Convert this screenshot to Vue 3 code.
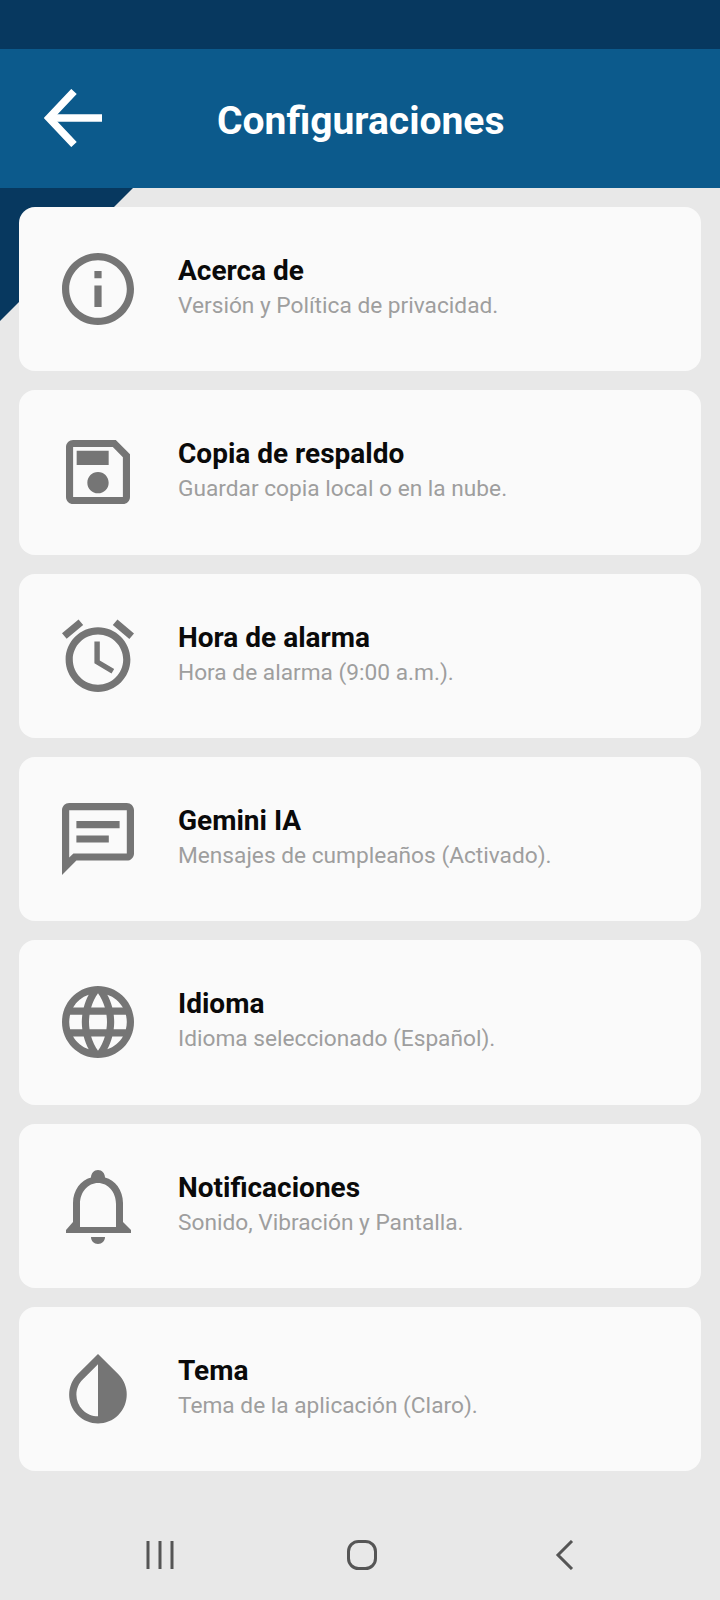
<template>
  <div class="page">
    <div class="status-bar"></div>
    <header class="app-header">
      <svg class="back-icon" width="58" height="58" viewBox="0 0 58 58" fill="none" stroke="currentColor" stroke-width="7.5">
        <path d="M58 29H5" />
        <path d="M30 2.5L5 29l25 26.5" />
      </svg>
      <h1 class="app-title">Configuraciones</h1>
    </header>

    <main class="content">
      <div class="corner"></div>
      <div v-for="item in items" :key="item.title" class="card">
        <svg class="card-icon" width="72" height="72" :viewBox="item.viewBox" fill="currentColor" fill-rule="evenodd">
          <path :d="item.icon" />
        </svg>
        <div class="card-text">
          <div class="card-title">{{ item.title }}</div>
          <div class="card-sub">{{ item.sub }}</div>
        </div>
      </div>
    </main>

    <nav class="nav-bar">
      <div class="nav-slot">
        <svg width="30" height="30" viewBox="0 0 30 30" fill="none" stroke="currentColor" stroke-width="3">
          <path d="M3 1v28M15 1v28M27 1v28" />
        </svg>
      </div>
      <div class="nav-slot">
        <svg width="30" height="30" viewBox="0 0 30 30" fill="none" stroke="currentColor" stroke-width="3">
          <rect x="1.5" y="1.5" width="27" height="27" rx="10" />
        </svg>
      </div>
      <div class="nav-slot">
        <svg width="30" height="30" viewBox="0 0 30 30" fill="none" stroke="currentColor" stroke-width="3">
          <path d="M23 1L9 15l14 14" />
        </svg>
      </div>
    </nav>
  </div>
</template>

<script setup>
const items = [
  {
    title: 'Acerca de',
    sub: 'Versión y Política de privacidad.',
    viewBox: '2 2 20 20',
    icon: 'M11 7h2v2h-2zm0 4h2v6h-2zm1-9C6.48 2 2 6.48 2 12s4.48 10 10 10 10-4.48 10-10S17.52 2 12 2zm0 18c-4.41 0-8-3.59-8-8s3.59-8 8-8 8 3.59 8 8-3.59 8-8 8z',
  },
  {
    title: 'Copia de respaldo',
    sub: 'Guardar copia local o en la nube.',
    viewBox: '1.875 1.875 20.25 20.25',
    icon: 'M17 3H5c-1.11 0-2 .9-2 2v14c0 1.1.89 2 2 2h14c1.1 0 2-.9 2-2V7l-4-4zm2 16H5V5h11.17L19 7.83V19zm-7-7c-1.66 0-3 1.34-3 3s1.34 3 3 3 3-1.34 3-3-1.34-3-3-3zM6 6h9v4H6z',
  },
  {
    title: 'Hora de alarma',
    sub: 'Hora de alarma (9:00 a.m.).',
    viewBox: '2 2 20 20',
    icon: 'M22 5.72l-4.6-3.86-1.29 1.53 4.6 3.86L22 5.72zM7.88 3.39L6.6 1.86 2 5.71l1.29 1.53 4.59-3.85zM12.5 8H11v6l4.75 2.85.75-1.23-4-2.37V8zM12 4c-4.97 0-9 4.03-9 9s4.03 9 9 9 9-4.03 9-9-4.03-9-9-9zm0 16c-3.87 0-7-3.13-7-7s3.13-7 7-7 7 3.13 7 7-3.13 7-7 7z',
  },
  {
    title: 'Gemini IA',
    sub: 'Mensajes de cumpleaños (Activado).',
    viewBox: '2 2 20 20',
    icon: 'M20 2H4c-1.1 0-2 .9-2 2v18l4-4h14c1.1 0 2-.9 2-2V4c0-1.1-.9-2-2-2zm0 14H5.17L4 17.17V4h16v12zM6 7h12v2H6zM6 11h9v2H6z',
  },
  {
    title: 'Idioma',
    sub: 'Idioma seleccionado (Español).',
    viewBox: '2 2 20 20',
    icon: 'M11.99 2C6.47 2 2 6.48 2 12s4.47 10 9.99 10C17.52 22 22 17.52 22 12S17.52 2 11.99 2zm6.93 6h-2.95c-.32-1.25-.78-2.45-1.38-3.56 1.84.63 3.37 1.91 4.33 3.56zM12 4.04c.83 1.2 1.48 2.53 1.91 3.96h-3.82c.43-1.43 1.08-2.76 1.91-3.96zM4.26 14C4.1 13.36 4 12.69 4 12s.1-1.36.26-2h3.38c-.08.66-.14 1.32-.14 2 0 .68.06 1.34.14 2H4.26zm.82 2h2.95c.32 1.25.78 2.45 1.38 3.56-1.84-.63-3.37-1.9-4.33-3.56zm2.95-8H5.08c.96-1.66 2.49-2.93 4.33-3.56C8.81 5.55 8.35 6.75 8.03 8zM12 19.96c-.83-1.2-1.48-2.53-1.91-3.96h3.82c-.43 1.43-1.08 2.76-1.91 3.96zM14.34 14H9.66c-.09-.66-.16-1.32-.16-2 0-.68.07-1.35.16-2h4.68c.09.65.16 1.32.16 2 0 .68-.07 1.34-.16 2zm.25 5.56c.6-1.11 1.06-2.31 1.38-3.56h2.95c-.96 1.65-2.49 2.93-4.33 3.56zM16.36 14c.08-.66.14-1.32.14-2 0-.68-.06-1.34-.14-2h3.38c.16.64.26 1.31.26 2s-.1 1.36-.26 2h-3.38z',
  },
  {
    title: 'Notificaciones',
    sub: 'Sonido, Vibración y Pantalla.',
    viewBox: '0 0 72 72',
    icon: 'M29 7.5C29 3.5 32 0 36 0s7 3.5 7 7.5C53 10 61 20 61 33v19l8 8v3H4v-3l7-8V33C11 20 19 10 29 7.5zM18 57h36V34c0-12-8-21-18-21s-18 9-18 21zM29 67h14c0 4-3 7-7 7s-7-3-7-7z',
  },
  {
    title: 'Tema',
    sub: 'Tema de la aplicación (Claro).',
    viewBox: '2 2 20 20',
    icon: 'M17.66 7.93L12 2.27 6.34 7.93c-3.12 3.12-3.12 8.19 0 11.31C7.9 20.8 9.95 21.58 12 21.58c2.05 0 4.1-.78 5.66-2.34 3.12-3.12 3.12-8.19 0-11.31zM12 19.59c-1.6 0-3.11-.62-4.24-1.76C6.62 16.69 6 15.19 6 13.59s.62-3.11 1.76-4.24L12 5.1v14.49z',
  },
]
</script>

<style scoped>
.page {
  width: 720px;
  height: 1600px;
  background: #e8e8e8;
  font-family: Roboto, "Liberation Sans", sans-serif;
  display: flex;
  flex-direction: column;
}

.status-bar {
  height: 49px;
  background: #07385f;
}

.app-header {
  height: 139px;
  background: #0c5a8c;
  display: flex;
  align-items: center;
  padding-left: 44px;
  color: #fff;
}

.back-icon {
  flex-shrink: 0;
  margin-top: -2px;
}

.app-title {
  margin: 6px 0 0 115px;
  font-size: 39px;
  font-weight: 700;
  line-height: 1;
  color: #fff;
}

.content {
  position: relative;
  padding: 19px 19px 0;
  display: flex;
  flex-direction: column;
  gap: 19px;
}

/* triangulo oscuro detras de la primera tarjeta */
.corner {
  position: absolute;
  left: 0;
  top: 0;
  width: 133px;
  height: 133px;
  background: #07385f;
  clip-path: polygon(0 0, 100% 0, 0 100%);
}

.card {
  position: relative;
  height: 164.33px;
  box-sizing: border-box;
  padding-left: 43px;
  background: #fafafa;
  border-radius: 16px;
  display: flex;
  align-items: center;
  gap: 44px;
}

.card-icon {
  flex-shrink: 0;
  color: #757575;
  overflow: visible;
}

.card-text {
  margin-top: -3px;
}

.card-title {
  font-size: 28px;
  font-weight: 700;
  line-height: 34px;
  color: #0a0a0a;
}

.card-sub {
  margin-top: 3px;
  font-size: 22.7px;
  line-height: 30px;
  color: #9e9e9e;
}

.nav-bar {
  display: flex;
  justify-content: center;
  margin-top: 69px;
  padding-left: 4px;
  color: #555;
}

.nav-slot {
  width: 202px;
  display: flex;
  justify-content: center;
}
</style>
